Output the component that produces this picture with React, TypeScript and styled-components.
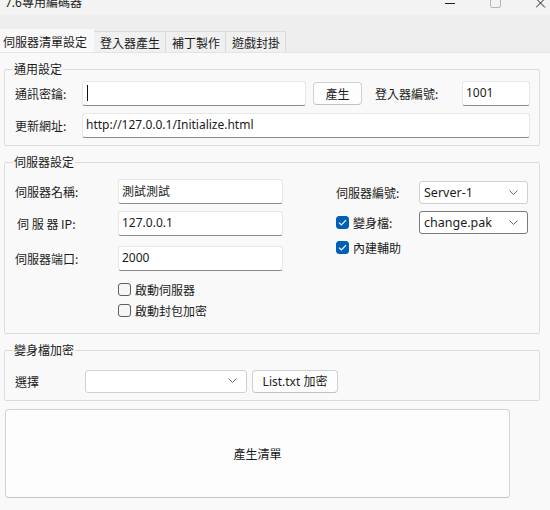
import styled, { createGlobalStyle } from "styled-components";

const GlobalStyle = createGlobalStyle`
  html, body {
    margin: 0;
    padding: 0;
    background: #f9f9f9;
  }
  * {
    box-sizing: border-box;
  }
  body {
    font-family: "Noto Sans", "Noto Sans CJK TC", sans-serif;
    font-size: 12px;
    color: #1b1b1b;
  }
`

const Chevron = () => (
  <svg width="9" height="5" viewBox="0 0 9 5">
    <polyline points="0.5,0.5 4.5,4.5 8.5,0.5" fill="none" stroke="#666" strokeWidth="1"/>
  </svg>
)

const Check = ({ checked }: { checked?: boolean }) => (
  <CheckBox $checked={checked}>
    {checked && (
      <svg width="9" height="7" viewBox="0 0 9 7">
        <polyline points="1,3.6 3.4,6 8,1.2" fill="none" stroke="#fff" strokeWidth="1.2"/>
      </svg>
    )}
  </CheckBox>
)

const App = () => {
  return (
    <Window>
      <GlobalStyle/>
      <TitleBar>
        <div className={'title'}>7.6專用編碼器</div>
        <div className={'controls'}>
          <svg width="10" height="8" viewBox="0 0 10 8">
            <line x1="0" y1="3.5" x2="10" y2="3.5" stroke="#222" strokeWidth="1"/>
          </svg>
          <svg width="11" height="8" viewBox="0 0 11 8">
            <rect x="0.5" y="-3" width="10" height="10.5" rx="1.5" fill="none" stroke="#b5b5b5"/>
          </svg>
          <svg width="10" height="8" viewBox="0 0 10 8">
            <line x1="0" y1="-1.5" x2="9" y2="7.5" stroke="#222" strokeWidth="1"/>
            <line x1="9" y1="-1.5" x2="0" y2="7.5" stroke="#222" strokeWidth="1"/>
          </svg>
        </div>
      </TitleBar>

      <TabStrip>
        <Tab $active>伺服器清單設定</Tab>
        <Tab>登入器產生</Tab>
        <Tab>補丁製作</Tab>
        <Tab>遊戲封掛</Tab>
      </TabStrip>

      <Panel>
        <Group $pt={5} $pb={7}>
          <legend>通用設定</legend>
          <Row>
            <Label $w={67}>通訊密鑰:</Label>
            <TextBox $w={224}><Caret/></TextBox>
            <Button $w={49} $ml={7}>產生</Button>
            <Label $w={87} $ml={13}>登入器編號:</Label>
            <TextBox $w={68} $top>1001</TextBox>
          </Row>
          <Row $mt={7}>
            <Label $w={67}>更新網址:</Label>
            <TextBox $w={448}>http://127.0.0.1/Initialize.html</TextBox>
          </Row>
        </Group>

        <Group $pt={10} $pb={14} $mt={9}>
          <legend>伺服器設定</legend>
          <Columns>
            <Column>
              <Row>
                <Label $w={103}>伺服器名稱:</Label>
                <TextBox $w={165}>測試測試</TextBox>
              </Row>
              <Row $mt={7}>
                <Label $w={103} $spaced>伺 服 器 IP:</Label>
                <TextBox $w={165}>127.0.0.1</TextBox>
              </Row>
              <Row $mt={10}>
                <Label $w={103}>伺服器端口:</Label>
                <TextBox $w={165}>2000</TextBox>
              </Row>
              <CheckRow $mt={10} $ml={103}>
                <Check/>
                <span>啟動伺服器</span>
              </CheckRow>
              <CheckRow $mt={4} $ml={103}>
                <Check/>
                <span>啟動封包加密</span>
              </CheckRow>
            </Column>

            <Column $pt={2}>
              <Row $h={23}>
                <Label $w={83}>伺服器編號:</Label>
                <Select $w={109}>
                  <span>Server-1</span>
                  <Chevron/>
                </Select>
              </Row>
              <Row $h={23} $mt={7}>
                <CheckRow $w={83}>
                  <Check checked/>
                  <span>變身檔:</span>
                </CheckRow>
                <Select $w={109} $focused>
                  <span>change.pak</span>
                  <Chevron/>
                </Select>
              </Row>
              <CheckRow $mt={5}>
                <Check checked/>
                <span>內建輔助</span>
              </CheckRow>
            </Column>
          </Columns>
        </Group>

        <Group $pt={12} $pb={7} $mt={9}>
          <legend>變身檔加密</legend>
          <Row $h={24}>
            <Label $w={70}>選擇</Label>
            <Select $w={162}>
              <span/>
              <Chevron/>
            </Select>
            <Button $w={86} $ml={5}>List.txt 加密</Button>
          </Row>
        </Group>

        <BigButton>產生清單</BigButton>
      </Panel>
    </Window>
  )
}

const Window = styled.div`
  width: 550px;
  height: 510px;
  overflow: hidden;
  display: flex;
  flex-direction: column;
  background: #f9f9f9;
`

const TitleBar = styled.div`
  height: 15px;
  background: #f3f3f3;
  display: flex;
  align-items: flex-start;
  overflow: hidden;

  & > .title {
    margin-top: -5px;
    padding-left: 5px;
    font-family: "Noto Sans", "Noto Sans CJK TC", sans-serif;
    font-size: 12px;
    line-height: 16px;
    color: #222;
  }

  & > .controls {
    margin-left: auto;
    padding-right: 4px;
    display: flex;
    align-items: flex-start;
    gap: 35px;

    & > svg {
      display: block;
    }
  }
`

const TabStrip = styled.div`
  height: 37px;
  background: #eeeeee;
  display: flex;
  align-items: flex-end;
`

const Tab = styled.div<{ $active?: boolean }>`
  height: ${p => p.$active ? 23 : 21}px;
  display: flex;
  align-items: center;
  padding: ${p => p.$active ? '0 6px 0 2px' : '0 5px 0 6px'};
  font-family: "Noto Sans CJK TC", sans-serif;
  font-size: 12px;
  color: #1b1b1b;
  background: ${p => p.$active ? '#f9f9f9' : '#f0f0f0'};
  border: 1px solid ${p => p.$active ? '#f9f9f9' : '#dadada'};
  border-bottom: none;
  margin-right: -1px;
  position: relative;
  z-index: ${p => p.$active ? 1 : 0};
`

const Panel = styled.div`
  flex: 1;
  border-top: 1px solid #e4e4e4;
  padding: 9px 10px 0 4px;
  display: flex;
  flex-direction: column;
`

const Group = styled.fieldset<{ $pt: number; $pb: number; $mt?: number }>`
  margin: ${p => p.$mt || 0}px 0 0 0;
  padding: ${p => p.$pt}px 9px ${p => p.$pb}px 10px;
  border: 1px solid #dcdcdc;
  border-radius: 2px;
  min-width: 0;

  & > legend {
    margin-left: -2px;
    padding: 0 1px;
    font-family: "Noto Sans CJK TC", sans-serif;
    font-size: 12px;
    line-height: 14px;
    color: #1b1b1b;
  }
`

const Columns = styled.div`
  display: flex;
  gap: 53px;
`

const Column = styled.div<{ $pt?: number }>`
  display: flex;
  flex-direction: column;
  padding-top: ${p => p.$pt || 0}px;
`

const Row = styled.div<{ $mt?: number; $h?: number }>`
  display: flex;
  align-items: center;
  height: ${p => p.$h || 25}px;
  margin-top: ${p => p.$mt || 0}px;
`

const Label = styled.div<{ $w: number; $ml?: number; $spaced?: boolean }>`
  width: ${p => p.$w}px;
  flex: none;
  margin-left: ${p => p.$ml || 0}px;
  padding-left: ${p => p.$spaced ? 2 : 0}px;
  font-family: "Noto Sans CJK TC", sans-serif;
  font-size: 12px;
  white-space: pre;
  color: #1b1b1b;
`

const TextBox = styled.div<{ $w: number; $top?: boolean }>`
  width: ${p => p.$w}px;
  height: 25px;
  flex: none;
  display: flex;
  align-items: ${p => p.$top ? 'flex-start' : 'center'};
  padding: ${p => p.$top ? '2px 3px 0' : '0 3px 2px'};
  background: #ffffff;
  border: 1px solid #e6e6e6;
  border-bottom: 1px solid #8b8b8b;
  border-radius: 3px;
  font-family: "Noto Sans", "Noto Sans CJK TC", sans-serif;
  font-size: 12px;
  color: #1b1b1b;
  white-space: nowrap;
  overflow: hidden;
`

const Caret = styled.span`
  display: block;
  width: 1px;
  height: 16px;
  margin-left: 1px;
  background: #111;
`

const Button = styled.div<{ $w: number; $ml?: number }>`
  width: ${p => p.$w}px;
  height: 23px;
  flex: none;
  margin-left: ${p => p.$ml || 0}px;
  display: flex;
  align-items: center;
  justify-content: center;
  background: #fdfdfd;
  border: 1px solid #d0d0d0;
  border-bottom-color: #c2c2c2;
  border-radius: 4px;
  font-family: "Noto Sans", "Noto Sans CJK TC", sans-serif;
  font-size: 12px;
  color: #1b1b1b;
  white-space: nowrap;
`

const Select = styled.div<{ $w: number; $focused?: boolean }>`
  width: ${p => p.$w}px;
  height: 23px;
  flex: none;
  display: flex;
  align-items: center;
  justify-content: space-between;
  padding: 0 9px 1px 4px;
  background: #ffffff;
  border: 1px solid ${p => p.$focused ? '#7a7a7a' : '#d0d0d0'};
  border-radius: 3px;
  font-family: "Noto Sans", "Noto Sans CJK TC", sans-serif;
  font-size: 12.5px;
  color: #1b1b1b;
`

const CheckRow = styled.div<{ $mt?: number; $ml?: number; $w?: number }>`
  display: flex;
  align-items: center;
  gap: 4px;
  height: 17px;
  flex: none;
  width: ${p => p.$w ? `${p.$w}px` : 'auto'};
  margin-top: ${p => p.$mt || 0}px;
  margin-left: ${p => p.$ml || 0}px;
  font-family: "Noto Sans CJK TC", sans-serif;
  font-size: 12px;
  color: #1b1b1b;
`

const CheckBox = styled.div<{ $checked?: boolean }>`
  width: 13px;
  height: 13px;
  flex: none;
  display: flex;
  align-items: center;
  justify-content: center;
  border-radius: 3px;
  border: 1px solid ${p => p.$checked ? '#005fb8' : '#5c5c5c'};
  background: ${p => p.$checked ? '#005fb8' : '#f6f6f6'};
`

const BigButton = styled.div`
  width: 505px;
  height: 89px;
  margin: 8px 0 0 1px;
  display: flex;
  align-items: center;
  justify-content: center;
  background: #fdfdfd;
  border: 1px solid #d3d3d3;
  border-bottom-color: #c4c4c4;
  border-radius: 4px;
  font-family: "Noto Sans CJK TC", sans-serif;
  font-size: 12px;
  color: #1b1b1b;
`

export default App
